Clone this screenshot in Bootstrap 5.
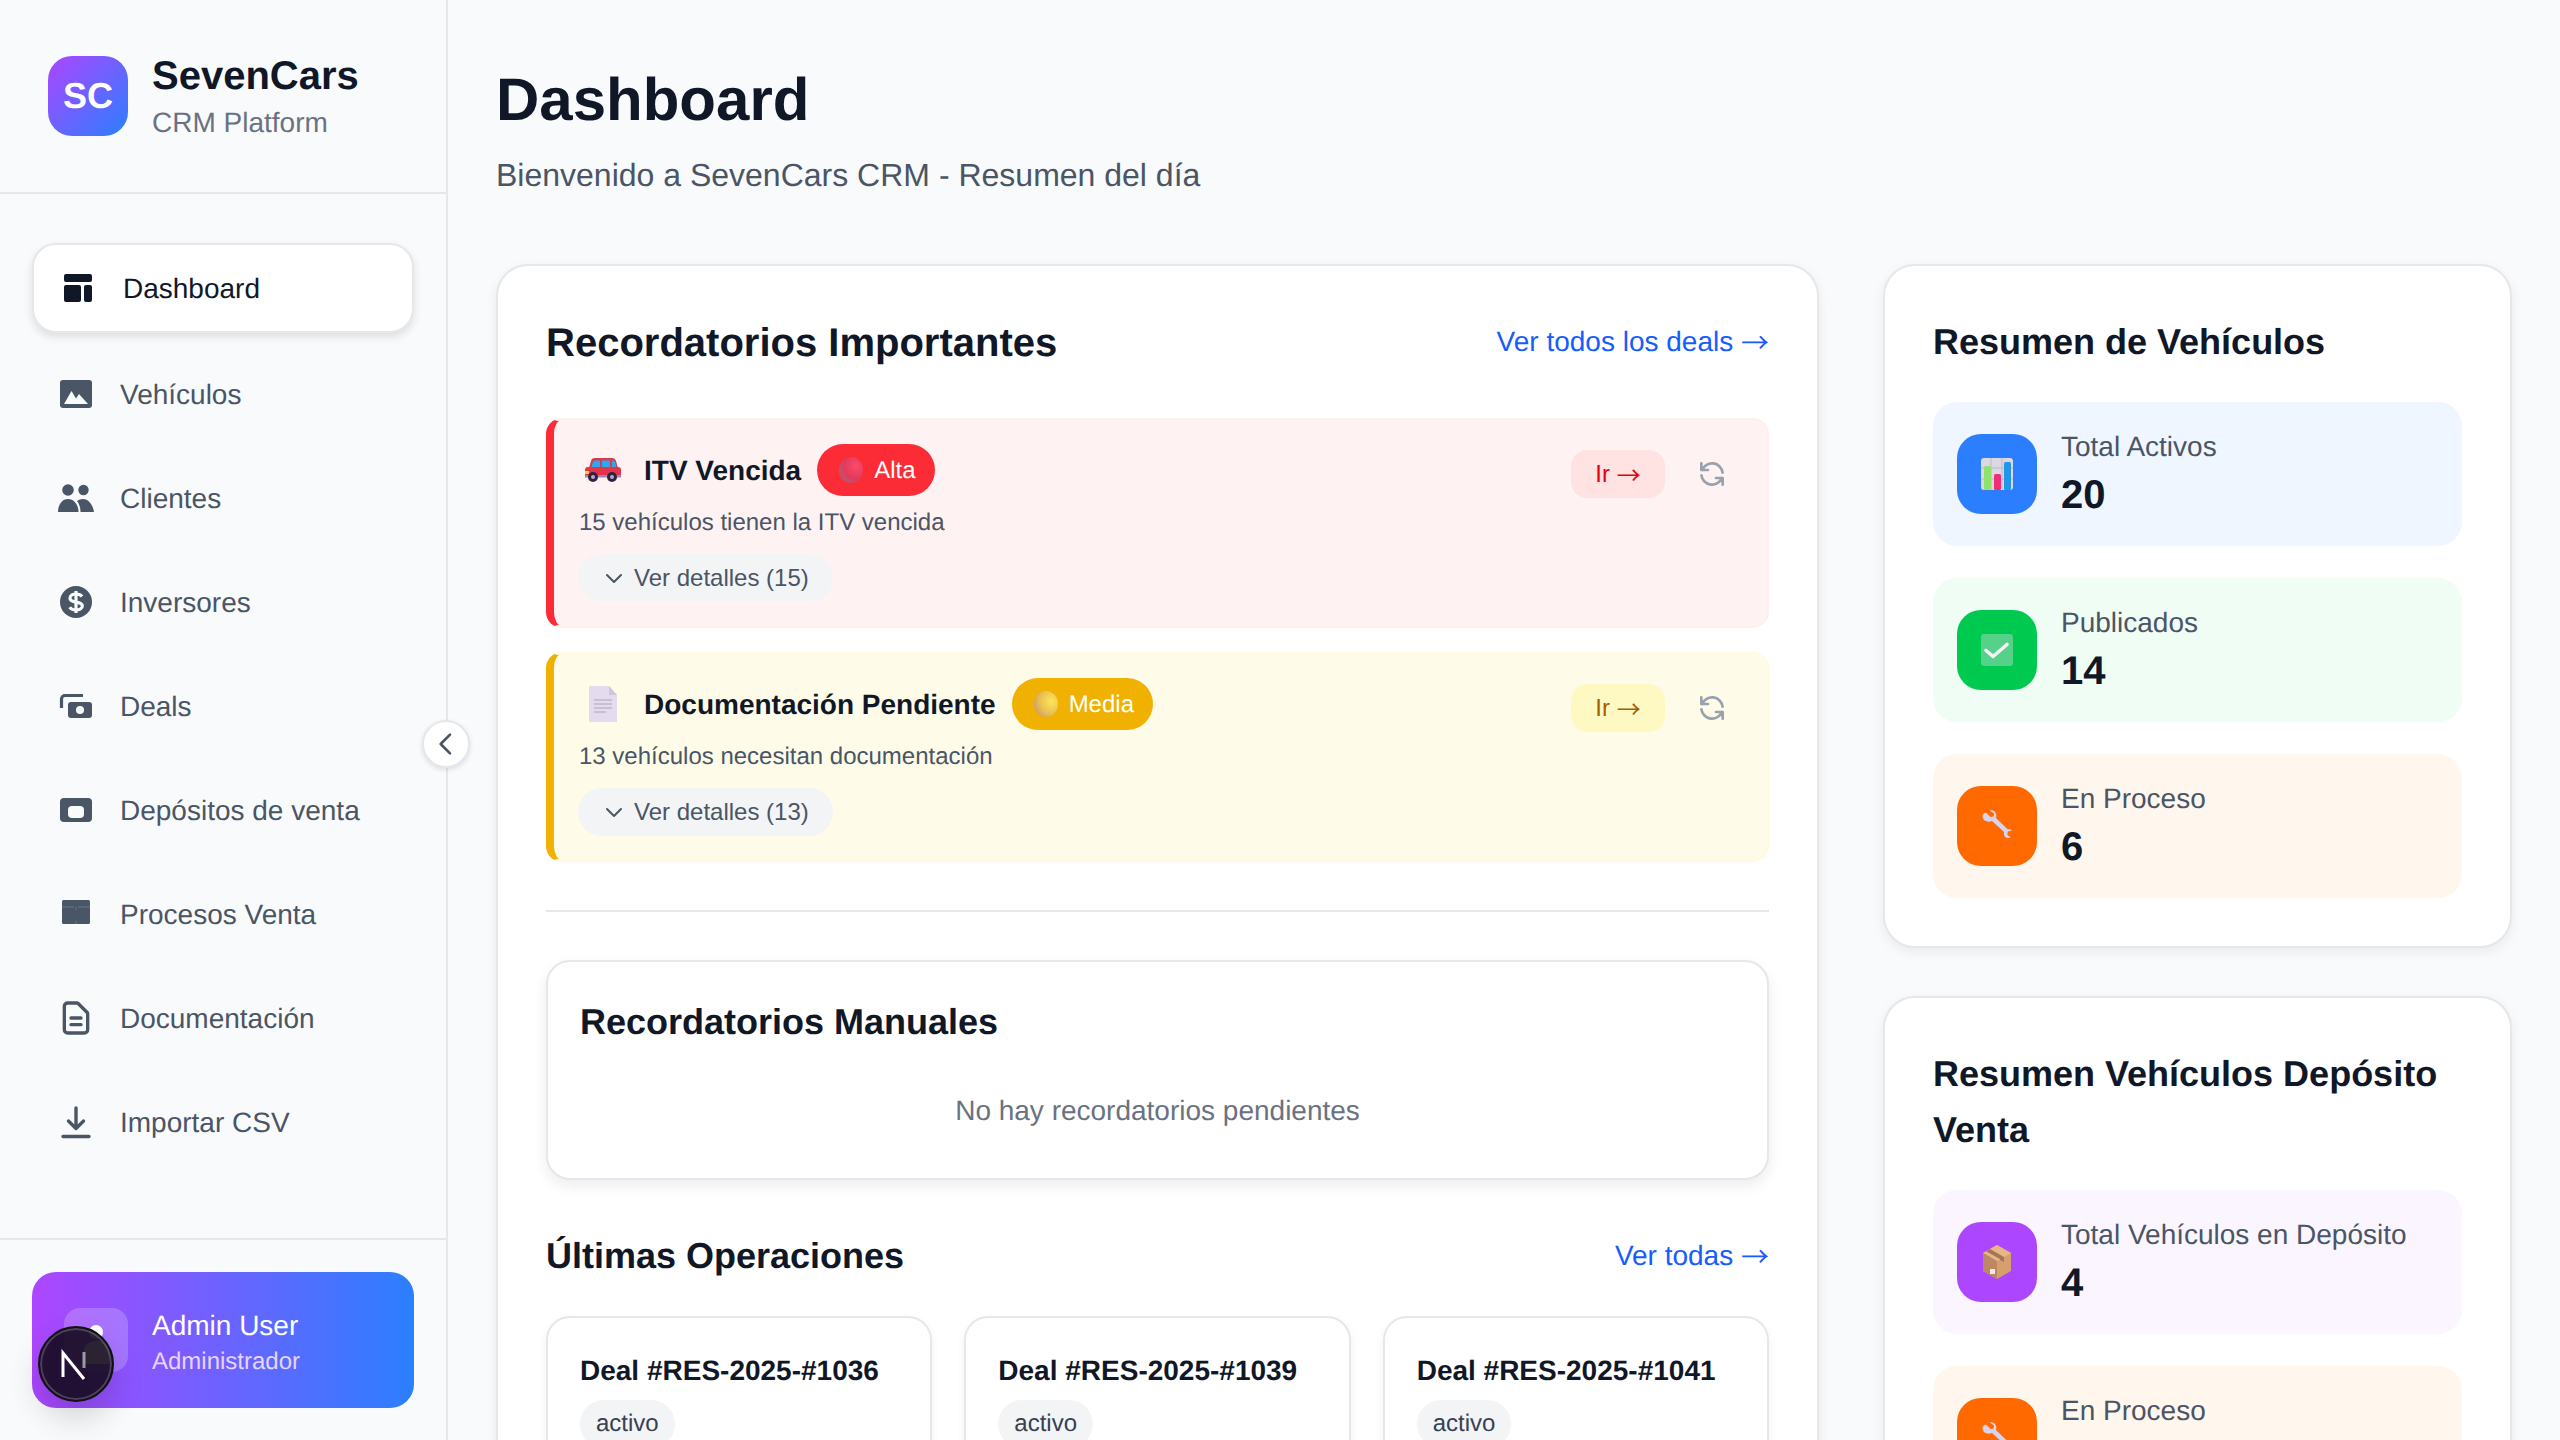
<!DOCTYPE html>
<html lang="es">
<head>
<meta charset="utf-8">
<title>SevenCars CRM</title>
<link href="https://cdn.jsdelivr.net/npm/bootstrap@5.3.0/dist/css/bootstrap.min.css" rel="stylesheet">
<style>
html,body{height:100%;overflow:hidden}
body{font-family:"Liberation Sans",Arial,sans-serif;background:#f9fafb;color:#101828;text-rendering:geometricPrecision;font-size:28px;line-height:42px}
svg{display:block;flex:none}
.arrow-glyph{font-family:"Noto Sans CJK KR","Liberation Sans",sans-serif;vertical-align:-2px;line-height:1}
.shell{height:1440px;width:2560px;overflow:hidden;position:relative}
.side{width:448px;flex:none;border-right:2px solid #e5e7eb;background:#f9fafb;height:1440px}
.brand{height:194px;border-bottom:2px solid #e5e7eb;padding:56px 48px;gap:24px}
.logo{width:80px;height:80px;border-radius:24px;background:linear-gradient(135deg,#ad46ff,#2b7fff);color:#fff;font-weight:700;font-size:36px}
.brand-name{font-size:40px;font-weight:700;line-height:50px;margin-top:2px}
.brand-sub{font-size:28px;color:#6a7282;line-height:40px;margin-top:2px}
.menu{padding:49px 32px 0;flex:1 1 auto}
.menu-item{height:88px;margin-bottom:16px;padding-left:24px;gap:24px;color:#4a5565;text-decoration:none;font-size:28px}
.menu-item span{padding-top:2px}
.menu-item.on{height:90px;margin:0 0 17px;padding-left:25px;background:#fff;border:2px solid #e5e7eb;border-radius:24px;color:#101828;box-shadow:0 4px 8px rgba(16,24,40,.12)}
.side-foot{height:202px;border-top:2px solid #e5e7eb;padding:32px}
.user-box{height:136px;border-radius:24px;background:linear-gradient(90deg,#ad46ff,#2b7fff);padding:0 32px;gap:24px;color:#fff}
.user-ava{width:64px;height:64px;border-radius:16px;background:rgba(255,255,255,.2)}
.user-name{font-size:28px;line-height:40px;margin-top:3px}
.user-role{font-size:24px;line-height:32px;color:#e9d4ff}
.toggle{position:absolute;left:422px;top:720px;width:48px;height:48px;border-radius:50%;background:#fff;border:2px solid #e5e7eb;box-shadow:0 2px 5px rgba(16,24,40,.12);z-index:3}
.next-dot{position:absolute;left:38px;top:1326px;width:76px;height:76px;border-radius:50%;background:rgba(20,10,30,.9);border:2px solid #111;box-shadow:inset 0 0 0 2px rgba(255,255,255,.2),0 16px 32px rgba(0,0,0,.16);z-index:4}
.main-area{flex:1 1 auto;padding:64px 48px 0;min-width:0}
.page-title{font-size:60px;line-height:72px;font-weight:700;margin:0}
.page-sub{font-size:32px;line-height:48px;color:#4a5565;margin:15px 0 65px}
.cols{display:grid;grid-template-columns:1323px 629px;column-gap:64px;align-items:start}
.panel{background:#fff;border:2px solid #e5e7eb;border-radius:32px;padding:48px;box-shadow:0 4px 12px rgba(16,24,40,.07);--bs-card-border-color:#e5e7eb;--bs-card-bg:#fff}
.panel+.panel{margin-top:48px}
.panel-title{font-size:36px;line-height:56px;font-weight:700;margin:0}
.title-large{font-size:40px;padding-top:2px;height:56px;line-height:54px}
.panel-head{margin-bottom:48px}
.stat-head{margin-bottom:32px}
.more-link{font-size:28px;color:#155dfc;text-decoration:none}
.alert-box{border:2px solid;border-left-width:8px;border-radius:16px;padding:24px 39px 24px 24px}
.alert-red{background:#fef2f2;border-color:#fff0f0 #fff0f0 #fff0f0 #fb2c36;margin-bottom:24px}
.alert-yellow{background:#fefce8;border-color:#fefbe0 #fefbe0 #fefbe0 #f0b100}
.emoji-slot{width:50px;height:52px;flex:none;margin-right:16px}
.alert-head{font-size:28px;font-weight:700;line-height:50px;padding-top:2px;margin:0}
.lvl{height:52px;margin-left:16px;padding:2px 19px 0 22px;gap:11px;border-radius:26px;color:#fff;font-size:24px;font-weight:400;line-height:36px}
.lvl svg{margin-top:-2px}
.lvl-red{background:#fb2c36}
.lvl-yellow{background:#f0b100}
.alert-text{font-size:24px;line-height:36px;color:#4a5565;margin:9px 0 13px;padding-left:1px}
.detail-pill{height:48px;padding:0 24px;gap:8px;border:0;border-radius:24px;background:#f3f4f6;color:#4a5565;font-size:24px;line-height:36px}
.go-pill{height:48px;width:94px;border-radius:16px;font-size:24px;border:0;padding:0;line-height:36px}
.go-red{background:#ffe2e2;color:#e7000b}
.go-yellow{background:#fef9c2;color:#a65f00}
.actions{gap:31px;margin-top:6px}
.rule{height:2px;background:#e5e7eb;margin:48px 0;opacity:1;border:0}
.sub-panel{border:2px solid #e5e7eb;border-radius:24px;padding:32px 32px 46px;background:#fff;box-shadow:0 6px 14px rgba(16,24,40,.08)}
.sub-title{font-size:36px;line-height:56px;font-weight:700;margin:0}
.empty-note{color:#6a7282;font-size:28px;line-height:42px;margin:40px 0 0;text-align:center}
.sec-head{margin-top:48px;margin-bottom:32px}
.deal-row{--bs-gutter-x:32px}
.deal-box{border:2px solid #e5e7eb;border-radius:24px;padding:32px;background:#fff;box-shadow:0 4px 10px rgba(16,24,40,.06)}
.deal-name{font-size:28px;line-height:42px;font-weight:700;margin:0 0 8px}
.deal-tag{display:inline-block;background:#f3f4f6;color:#364153;border-radius:24px;padding:6px 16px;font-size:24px;line-height:36px}
.stat{height:144px;border-radius:24px;padding:0 24px;gap:24px;margin-bottom:32px}
.stat:last-child{margin-bottom:0}
.stat-ico{width:80px;height:80px;border-radius:24px;flex:none}
.stat-label{font-size:28px;line-height:42px;color:#4a5565}
.stat-val{font-size:40px;line-height:54px;font-weight:700;color:#101828}
.t-blue{background:#eff6ff}.t-green{background:#f0fdf4}.t-orange{background:#fff7ed}.t-purple{background:#faf5ff}
.i-blue{background:#2b7fff}.i-green{background:#00c950}.i-orange{background:#ff6900}.i-purple{background:#ad46ff}
</style>
</head>
<body>
<svg width="0" height="0" style="position:absolute">
<defs>
<radialGradient id="ballR" cx=".7" cy=".35" r=".8"><stop offset="0" stop-color="#ff4a68"/><stop offset=".6" stop-color="#e23a5c"/><stop offset="1" stop-color="#b35a78"/></radialGradient>
<radialGradient id="ballY" cx=".72" cy=".4" r=".8"><stop offset="0" stop-color="#ffe45a"/><stop offset=".6" stop-color="#e8c050"/><stop offset="1" stop-color="#c89a70"/></radialGradient>
<symbol id="wrench" viewBox="0 0 32 32"><path d="M5 2.500 9.500 7l3-.5.6-3L8.800.5C12-.5 15.500 2 15.300 6c0 .8-.1 1.300-.4 2l12 11.500c1.500-.4 3.300-.1 4 1.100l-4 .9-.6 3.300 3.600 2.500c-3 1.800-7 .3-7-3.800 0-.6 0-1.100.2-1.600L11 11c-3.500 1.500-9 .5-9.500-4.500C1.300 5 2 3.500 5 2.500Z" fill="#d6d3ea"/></symbol>
</defs>
</svg>
<div class="shell d-flex">
  <aside class="side d-flex flex-column">
    <div class="brand d-flex align-items-center">
      <div class="logo d-flex align-items-center justify-content-center">SC</div>
      <div>
        <div class="brand-name">SevenCars</div>
        <div class="brand-sub">CRM Platform</div>
      </div>
    </div>
    <nav class="menu nav flex-column flex-nowrap">
      <a class="menu-item on d-flex align-items-center" href="#">
        <svg width="40" height="40" viewBox="0 0 40 40" fill="#101828"><rect x="5" y="6" width="28" height="8" rx="2"/><rect x="5" y="17" width="17" height="17" rx="2"/><rect x="25" y="17" width="8" height="17" rx="2"/></svg>
        <span>Dashboard</span>
      </a>
      <a class="menu-item d-flex align-items-center" href="#">
        <svg width="40" height="40" viewBox="0 0 40 40"><rect x="4" y="6" width="32" height="28" rx="3" fill="#4a5565"/><path d="M8 30l7.500-13 4.500 7.500 3-4.500 9 10z" fill="#f9fafb"/></svg>
        <span>Vehículos</span>
      </a>
      <a class="menu-item d-flex align-items-center" href="#">
        <svg width="40" height="40" viewBox="0 0 40 40" fill="#4a5565"><circle cx="12" cy="12" r="5.800"/><circle cx="27.500" cy="12" r="5.200"/><path d="M2 34c0-7 4-13 10-13s10.500 6 10.500 13z"/><path d="M24.500 34c0-4-1-8-3.500-11 1.500-1.300 3.800-2 6-2 5.500 0 10 6 11 13z"/></svg>
        <span>Clientes</span>
      </a>
      <a class="menu-item d-flex align-items-center" href="#">
        <svg width="40" height="40" viewBox="0 0 40 40"><circle cx="20" cy="20" r="16" fill="#4a5565"/><path d="M26 14.500c-1-1.500-3.200-2.500-6-2.500-3.500 0-6 1.700-6 4.200 0 5.600 12.300 2.400 12.300 7.800 0 2.500-2.800 4-6.300 4-3 0-5.300-1-6.300-2.700M20 9v22" fill="none" stroke="#f9fafb" stroke-width="3.200"/></svg>
        <span>Inversores</span>
      </a>
      <a class="menu-item d-flex align-items-center" href="#">
        <svg width="40" height="40" viewBox="0 0 40 40"><path d="M5.500 22V13a3.500 3.500 0 0 1 3.500-3.500H27" fill="none" stroke="#4a5565" stroke-width="3.200"/><rect x="12" y="16" width="24" height="16" rx="3" fill="#4a5565"/><circle cx="24" cy="24" r="4" fill="#f9fafb"/></svg>
        <span>Deals</span>
      </a>
      <a class="menu-item d-flex align-items-center" href="#">
        <svg width="40" height="40" viewBox="0 0 40 40"><rect x="4" y="8" width="32" height="24" rx="4" fill="#4a5565"/><rect x="12" y="16" width="16" height="12" rx="4" fill="#f9fafb"/></svg>
        <span>Depósitos de venta</span>
      </a>
      <a class="menu-item d-flex align-items-center" href="#">
        <svg width="40" height="40" viewBox="0 0 40 40"><rect x="6" y="6" width="28" height="24" rx="1.500" fill="#4a5565"/><path d="M6 13h12M22 13h12M20 13v3M20 27v3" stroke="#6b7687" stroke-width="1"/></svg>
        <span>Procesos Venta</span>
      </a>
      <a class="menu-item d-flex align-items-center" href="#">
        <svg width="40" height="40" viewBox="0 0 24 24" fill="none" stroke="#4a5565" stroke-width="2" stroke-linecap="round" stroke-linejoin="round"><path d="M9 12h6m-6 4h6m2 5H7a2 2 0 01-2-2V5a2 2 0 012-2h5.586a1 1 0 01.707.293l5.414 5.414a1 1 0 01.293.707V19a2 2 0 01-2 2z"/></svg>
        <span>Documentación</span>
      </a>
      <a class="menu-item d-flex align-items-center" href="#">
        <svg width="40" height="40" viewBox="0 0 40 40" fill="none" stroke="#4a5565" stroke-width="3.400" stroke-linecap="round" stroke-linejoin="round"><path d="M20 6v20M12.500 19l7.500 7.500 7.500-7.500M7 34.500h26"/></svg>
        <span>Importar CSV</span>
      </a>
    </nav>
    <div class="side-foot">
      <div class="user-box d-flex align-items-center">
        <div class="user-ava">
          <svg width="64" height="64" viewBox="0 0 64 64" fill="#fff"><circle cx="32" cy="24" r="7"/><path d="M19 56V46a13 13 0 0 1 27 0v10z"/></svg>
        </div>
        <div>
          <div class="user-name">Admin User</div>
          <div class="user-role">Administrador</div>
        </div>
      </div>
    </div>
  </aside>
  <button class="toggle d-flex align-items-center justify-content-center p-0" type="button" aria-label="Colapsar">
    <svg width="32" height="32" viewBox="0 0 24 24" fill="none" stroke="#4a5565" stroke-width="2" stroke-linecap="round" stroke-linejoin="round"><path d="M15 19l-7-7 7-7"/></svg>
  </button>
  <div class="next-dot d-flex align-items-center justify-content-center">
    <svg width="40" height="40" viewBox="0 0 40 40" fill="none"><path d="M7 33V9l21 26" stroke="#fff" stroke-width="3"/><path d="M28 8v16" stroke="#fff" stroke-width="3" opacity=".55"/></svg>
  </div>

  <main class="main-area">
    <h1 class="page-title">Dashboard</h1>
    <p class="page-sub">Bienvenido a SevenCars CRM - Resumen del día</p>
    <div class="cols">
      <section class="panel card d-block">
        <div class="panel-head d-flex justify-content-between align-items-center">
          <h2 class="panel-title title-large">Recordatorios Importantes</h2>
          <a class="more-link" href="#">Ver todos los deals <span class="arrow-glyph">→</span></a>
        </div>

        <div class="alert-box alert-red d-flex justify-content-between">
          <div>
            <div class="d-flex align-items-center">
              <span class="emoji-slot d-flex align-items-center justify-content-center">
                <svg width="36" height="26" viewBox="0 0 36 26"><path d="M6 4c.5-2 1.500-3 4-3h17c2.500 0 3.300 1 4 3l2 7H4z" fill="#d93a4e"/><path d="M8 5c.3-1 1-1.500 2-1.500h5V10H6.500z" fill="#29a9ee"/><path d="M17 3.500h8V10h-8z" fill="#29a9ee"/><path d="M27 3.500h1c1 0 1.700.5 2 1.500l1.500 5H27z" fill="#29a9ee"/><rect x="0" y="10" width="36" height="10" rx="3" fill="#e5334a"/><rect x="0" y="14" width="4" height="3" fill="#ffd23f"/><rect x="0" y="18" width="36" height="2.500" fill="#a084b4"/><circle cx="8" cy="20" r="5" fill="#2f2440"/><circle cx="8" cy="20" r="2" fill="#b9a8c9"/><circle cx="27" cy="20" r="5" fill="#2f2440"/><circle cx="27" cy="20" r="2" fill="#b9a8c9"/></svg>
              </span>
              <h3 class="alert-head">ITV Vencida</h3>
              <span class="lvl lvl-red d-inline-flex align-items-center badge">
                <svg width="24" height="26" viewBox="0 0 24 26"><ellipse cx="12" cy="13" rx="12" ry="13" fill="url(#ballR)"/></svg>
                <span>Alta</span>
              </span>
            </div>
            <p class="alert-text">15 vehículos tienen la ITV vencida</p>
            <button class="detail-pill d-inline-flex align-items-center" type="button">
              <svg width="24" height="24" viewBox="0 0 24 24" fill="none" stroke="#4a5565" stroke-width="2" stroke-linecap="round" stroke-linejoin="round"><path d="M19 9l-7 7-7-7"/></svg>
              <span>Ver detalles (15)</span>
            </button>
          </div>
          <div class="actions d-flex align-items-center align-self-start">
            <button class="go-pill go-red btn" type="button">Ir <span class="arrow-glyph">→</span></button>
            <svg width="32" height="32" viewBox="0 0 24 24" fill="none" stroke="#99a1af" stroke-width="2" stroke-linecap="round" stroke-linejoin="round"><path d="M4 4v5h.582m15.356 2A8.001 8.001 0 004.582 9m0 0H9m11 11v-5h-.581m0 0a8.003 8.003 0 01-15.357-2m15.357 2H15"/></svg>
          </div>
        </div>

        <div class="alert-box alert-yellow d-flex justify-content-between">
          <div>
            <div class="d-flex align-items-center">
              <span class="emoji-slot d-flex align-items-center justify-content-center">
                <svg width="28" height="36" viewBox="0 0 28 36"><path d="M0 0h20l8 9v27H0z" fill="#e4dcee"/><path d="M20 0l8 9h-8z" fill="#cfc6d9"/><path d="M5 14h18M5 18h18M5 22h18M5 26h12" stroke="#a9a3b5" stroke-width="1.200"/></svg>
              </span>
              <h3 class="alert-head">Documentación Pendiente</h3>
              <span class="lvl lvl-yellow d-inline-flex align-items-center badge">
                <svg width="24" height="26" viewBox="0 0 24 26"><ellipse cx="12" cy="13" rx="12" ry="13" fill="url(#ballY)"/></svg>
                <span>Media</span>
              </span>
            </div>
            <p class="alert-text">13 vehículos necesitan documentación</p>
            <button class="detail-pill d-inline-flex align-items-center" type="button">
              <svg width="24" height="24" viewBox="0 0 24 24" fill="none" stroke="#4a5565" stroke-width="2" stroke-linecap="round" stroke-linejoin="round"><path d="M19 9l-7 7-7-7"/></svg>
              <span>Ver detalles (13)</span>
            </button>
          </div>
          <div class="actions d-flex align-items-center align-self-start">
            <button class="go-pill go-yellow btn" type="button">Ir <span class="arrow-glyph">→</span></button>
            <svg width="32" height="32" viewBox="0 0 24 24" fill="none" stroke="#99a1af" stroke-width="2" stroke-linecap="round" stroke-linejoin="round"><path d="M4 4v5h.582m15.356 2A8.001 8.001 0 004.582 9m0 0H9m11 11v-5h-.581m0 0a8.003 8.003 0 01-15.357-2m15.357 2H15"/></svg>
          </div>
        </div>

        <hr class="rule">

        <div class="sub-panel">
          <h3 class="sub-title">Recordatorios Manuales</h3>
          <p class="empty-note">No hay recordatorios pendientes</p>
        </div>

        <div class="sec-head d-flex justify-content-between align-items-center">
          <h2 class="panel-title">Últimas Operaciones</h2>
          <a class="more-link" href="#">Ver todas <span class="arrow-glyph">→</span></a>
        </div>
        <div class="row deal-row">
          <div class="col-4"><div class="deal-box"><h4 class="deal-name">Deal #RES-2025-#1036</h4><span class="deal-tag">activo</span></div></div>
          <div class="col-4"><div class="deal-box"><h4 class="deal-name">Deal #RES-2025-#1039</h4><span class="deal-tag">activo</span></div></div>
          <div class="col-4"><div class="deal-box"><h4 class="deal-name">Deal #RES-2025-#1041</h4><span class="deal-tag">activo</span></div></div>
        </div>
      </section>

      <div>
        <section class="panel card d-block">
          <h2 class="panel-title stat-head">Resumen de Vehículos</h2>
          <div class="stat t-blue d-flex align-items-center">
            <div class="stat-ico i-blue d-flex align-items-center justify-content-center">
              <svg width="32" height="32" viewBox="0 0 32 32"><rect width="32" height="32" rx="3" fill="#dcd8e2"/><path d="M0 10h32M0 21h32M10 0v32M21 0v32" stroke="#bdb8c6" stroke-width="1"/><rect x="3" y="8" width="7" height="24" rx="1.500" fill="#8fe36c"/><rect x="13" y="16" width="7" height="16" rx="1.500" fill="#ee2f78"/><rect x="23" y="4" width="7" height="28" rx="1.500" fill="#2296e8"/></svg>
            </div>
            <div><div class="stat-label">Total Activos</div><div class="stat-val">20</div></div>
          </div>
          <div class="stat t-green d-flex align-items-center">
            <div class="stat-ico i-green d-flex align-items-center justify-content-center">
              <svg width="32" height="32" viewBox="0 0 32 32"><rect width="32" height="32" rx="3" fill="#56d18a"/><path d="M5 16.500l7 6 14-12" fill="none" stroke="#f4f2f8" stroke-width="3.600" stroke-linecap="round" stroke-linejoin="round"/></svg>
            </div>
            <div><div class="stat-label">Publicados</div><div class="stat-val">14</div></div>
          </div>
          <div class="stat t-orange d-flex align-items-center">
            <div class="stat-ico i-orange d-flex align-items-center justify-content-center">
              <svg width="32" height="32"><use href="#wrench"/></svg>
            </div>
            <div><div class="stat-label">En Proceso</div><div class="stat-val">6</div></div>
          </div>
        </section>

        <section class="panel card d-block">
          <h2 class="panel-title stat-head">Resumen Vehículos Depósito Venta</h2>
          <div class="stat t-purple d-flex align-items-center">
            <div class="stat-ico i-purple d-flex align-items-center justify-content-center">
              <svg width="30" height="34" viewBox="0 0 30 34"><path d="M15 0l14 8v18l-14 8-14-8V8z" fill="#d6a06e"/><path d="M15 0l14 8-14 8L1 8z" fill="#e6b684"/><path d="M1 8l14 8v18L1 26z" fill="#bd8763"/><path d="M8 4l14 8v5l-4-2v-1L4 6.300z" fill="#a5745a"/><rect x="8" y="24" width="5" height="5" fill="#efe6e8"/></svg>
            </div>
            <div><div class="stat-label">Total Vehículos en Depósito</div><div class="stat-val">4</div></div>
          </div>
          <div class="stat t-orange d-flex align-items-center">
            <div class="stat-ico i-orange d-flex align-items-center justify-content-center">
              <svg width="32" height="32"><use href="#wrench"/></svg>
            </div>
            <div><div class="stat-label">En Proceso</div><div class="stat-val">2</div></div>
          </div>
        </section>
      </div>
    </div>
  </main>
</div>
<script src="https://cdn.jsdelivr.net/npm/bootstrap@5.3.0/dist/js/bootstrap.bundle.min.js"></script>
</body>
</html>
